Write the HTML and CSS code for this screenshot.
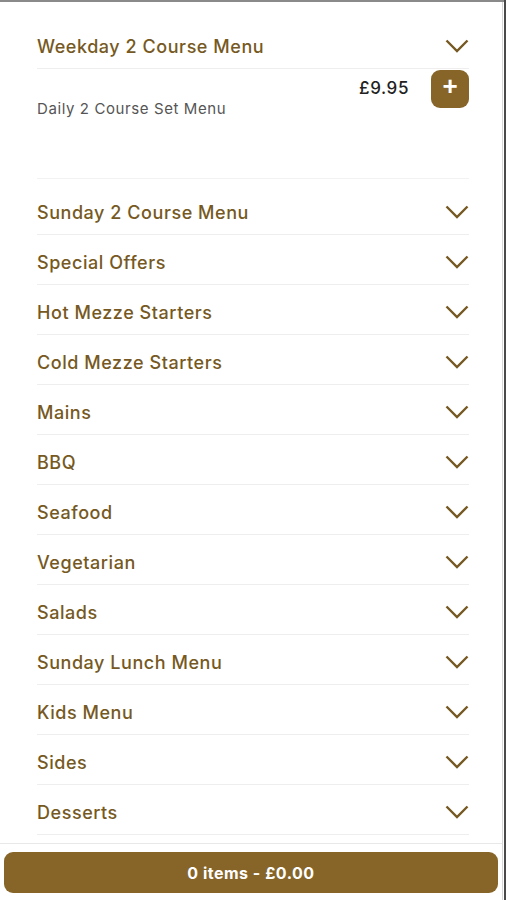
FILE: index.html
```html
<!DOCTYPE html>
<html>
    <head>
        <title>Menu</title>
        <link rel="stylesheet" href="styles.css">
    </head>
    <body>
        <div class="page">
            <div class="menu">
                <div class="category open">
                    <div class="catHead">
                        <span class="catName">Weekday 2 Course Menu</span>
                        <svg class="chevron" width="24" height="14" viewBox="0 0 24 14"><path d="M1.5 1.5 L12 12 L22.5 1.5"/></svg>
                    </div>
                    <div class="catBody">
                        <div class="item">
                            <div class="itemInfo">
                                <span class="itemDesc">Daily 2 Course Set Menu</span>
                            </div>
                            <div class="itemBuy">
                                <span class="price">£9.95</span>
                                <button class="add">+</button>
                            </div>
                        </div>
                    </div>
                </div>
                <div class="category">
                    <div class="catHead"><span class="catName">Sunday 2 Course Menu</span><svg class="chevron" width="24" height="14" viewBox="0 0 24 14"><path d="M1.5 1.5 L12 12 L22.5 1.5"/></svg></div>
                </div>
                <div class="category">
                    <div class="catHead"><span class="catName">Special Offers</span><svg class="chevron" width="24" height="14" viewBox="0 0 24 14"><path d="M1.5 1.5 L12 12 L22.5 1.5"/></svg></div>
                </div>
                <div class="category">
                    <div class="catHead"><span class="catName">Hot Mezze Starters</span><svg class="chevron" width="24" height="14" viewBox="0 0 24 14"><path d="M1.5 1.5 L12 12 L22.5 1.5"/></svg></div>
                </div>
                <div class="category">
                    <div class="catHead"><span class="catName">Cold Mezze Starters</span><svg class="chevron" width="24" height="14" viewBox="0 0 24 14"><path d="M1.5 1.5 L12 12 L22.5 1.5"/></svg></div>
                </div>
                <div class="category">
                    <div class="catHead"><span class="catName">Mains</span><svg class="chevron" width="24" height="14" viewBox="0 0 24 14"><path d="M1.5 1.5 L12 12 L22.5 1.5"/></svg></div>
                </div>
                <div class="category">
                    <div class="catHead"><span class="catName">BBQ</span><svg class="chevron" width="24" height="14" viewBox="0 0 24 14"><path d="M1.5 1.5 L12 12 L22.5 1.5"/></svg></div>
                </div>
                <div class="category">
                    <div class="catHead"><span class="catName">Seafood</span><svg class="chevron" width="24" height="14" viewBox="0 0 24 14"><path d="M1.5 1.5 L12 12 L22.5 1.5"/></svg></div>
                </div>
                <div class="category">
                    <div class="catHead"><span class="catName">Vegetarian</span><svg class="chevron" width="24" height="14" viewBox="0 0 24 14"><path d="M1.5 1.5 L12 12 L22.5 1.5"/></svg></div>
                </div>
                <div class="category">
                    <div class="catHead"><span class="catName">Salads</span><svg class="chevron" width="24" height="14" viewBox="0 0 24 14"><path d="M1.5 1.5 L12 12 L22.5 1.5"/></svg></div>
                </div>
                <div class="category">
                    <div class="catHead"><span class="catName">Sunday Lunch Menu</span><svg class="chevron" width="24" height="14" viewBox="0 0 24 14"><path d="M1.5 1.5 L12 12 L22.5 1.5"/></svg></div>
                </div>
                <div class="category">
                    <div class="catHead"><span class="catName">Kids Menu</span><svg class="chevron" width="24" height="14" viewBox="0 0 24 14"><path d="M1.5 1.5 L12 12 L22.5 1.5"/></svg></div>
                </div>
                <div class="category">
                    <div class="catHead"><span class="catName">Sides</span><svg class="chevron" width="24" height="14" viewBox="0 0 24 14"><path d="M1.5 1.5 L12 12 L22.5 1.5"/></svg></div>
                </div>
                <div class="category">
                    <div class="catHead"><span class="catName">Desserts</span><svg class="chevron" width="24" height="14" viewBox="0 0 24 14"><path d="M1.5 1.5 L12 12 L22.5 1.5"/></svg></div>
                </div>
            </div>
            <div class="basket">
                <button class="basketBtn">0 items - £0.00</button>
            </div>
        </div>
    </body>
</html>
```

FILE: styles.css
```css
html{
    background: #4a4a4a;
}
body{
    margin: 0;
    width: 504px;
    height: 898px;
    background: white;
    border-top: 2px solid #8a8a8a;
    font-family: Inter, "Noto Sans", sans-serif;
}
.page{
    width: 502px;
    height: 898px;
    border-right: 1px solid #d6d6d6;
    display: flex;
    flex-direction: column;
}
.menu{
    flex: 1;
    overflow: hidden;
    padding: 17px 33px 0 37px;
}
.catHead{
    height: 49px;
    display: flex;
    align-items: center;
    justify-content: space-between;
    border-bottom: 1px solid #eeeeee;
}
.catName{
    font-size: 18px;
    font-weight: 500;
    letter-spacing: 0.55px;
    color: #765922;
    padding-top: 6px;
}
.chevron{
    margin-top: 4px;
}
.chevron path{
    fill: none;
    stroke: #765922;
    stroke-width: 2.4;
}
.catBody{
    height: 109px;
    border-bottom: 1px solid #f2f2f2;
    margin-bottom: 6px;
}
.item{
    display: flex;
    padding-top: 1px;
}
.itemInfo{
    flex: 1;
    padding-top: 28px;
}
.itemDesc{
    font-size: 15px;
    letter-spacing: 0.6px;
    color: #555;
    line-height: 20px;
}
.itemBuy{
    display: flex;
    align-items: center;
    gap: 22px;
    height: 38px;
}
.price{
    font-size: 17px;
    font-weight: 500;
    color: #222;
    letter-spacing: 0.6px;
    margin-top: -2px;
}
.add{
    width: 38px;
    height: 38px;
    border: none;
    border-radius: 9px;
    background: #876528;
    color: white;
    font-family: "Liberation Sans", Arial, sans-serif;
    font-size: 26px;
    font-weight: bold;
    line-height: 1;
    padding: 0 0 6px 0;
}
.basket{
    height: 57px;
    box-sizing: border-box;
    border-top: 1px solid #e8e8e8;
    padding: 8px 4px 0 4px;
}
.basketBtn{
    width: 100%;
    height: 41px;
    border: none;
    border-radius: 9px;
    background: #876528;
    color: white;
    font-family: Inter, "Noto Sans", sans-serif;
    font-size: 16px;
    font-weight: 700;
    letter-spacing: 0.5px;
}
```
